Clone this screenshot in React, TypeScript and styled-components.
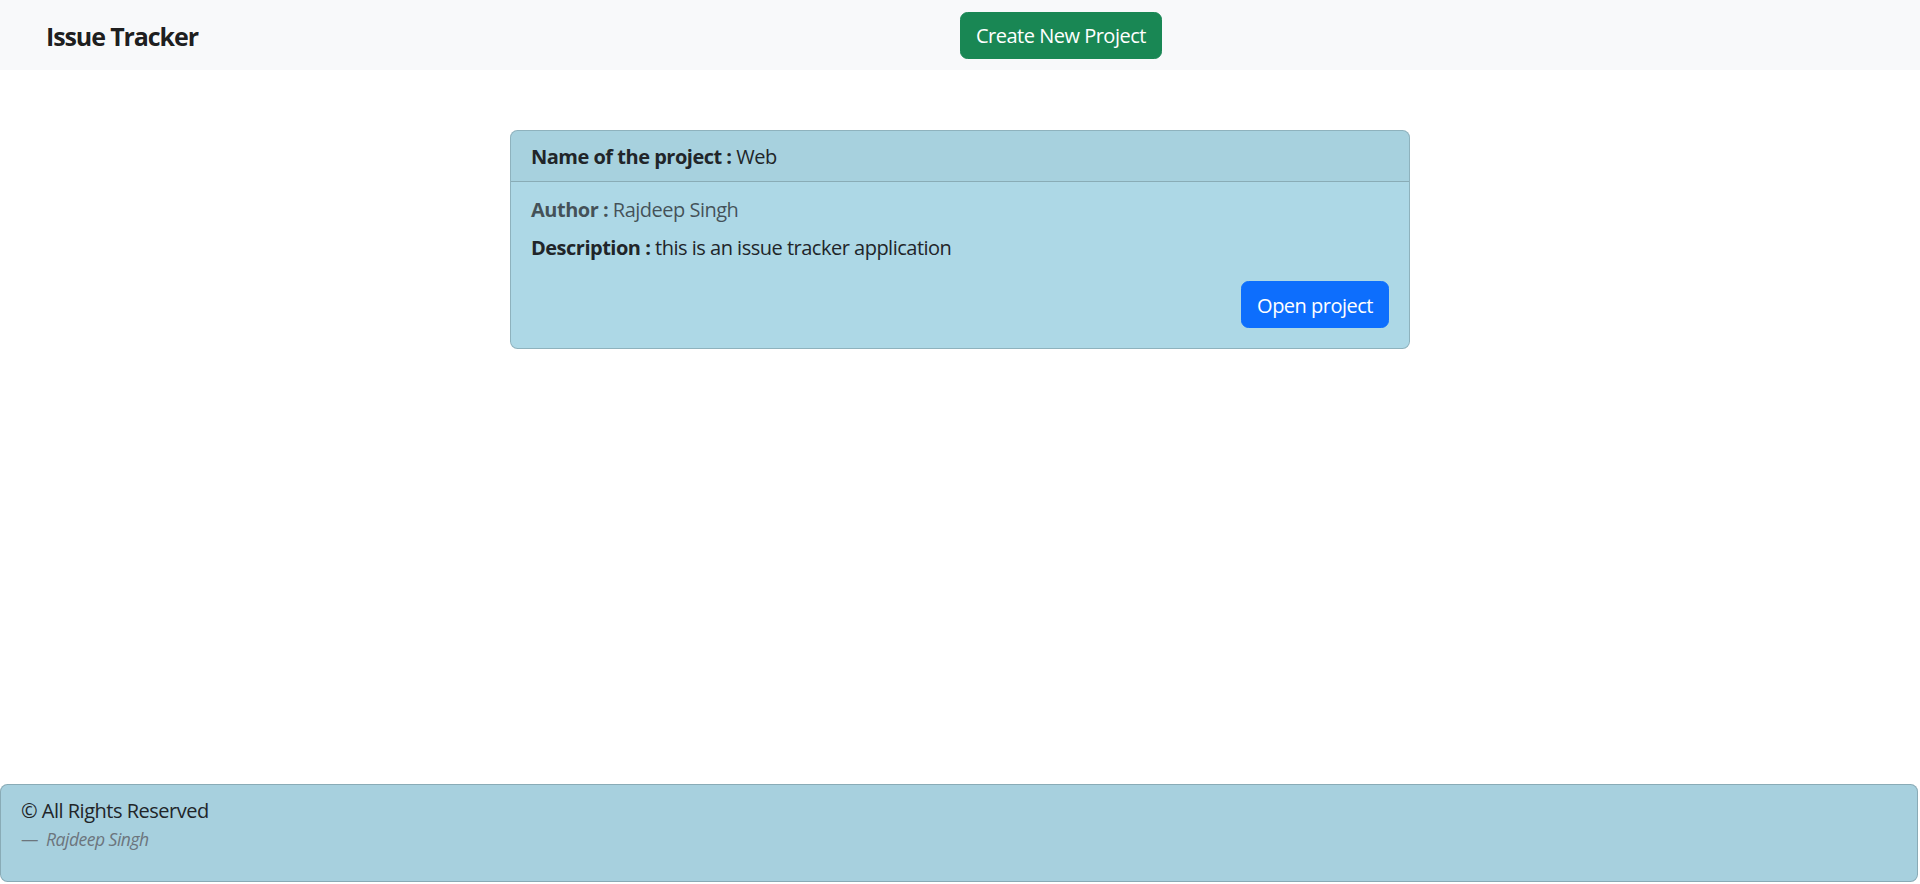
import React from "react";
import styled, { createGlobalStyle } from "styled-components";

const FONT = `"Open Sans", "Noto Sans", "Liberation Sans", sans-serif`;

const GlobalStyle = createGlobalStyle`
  *, *::before, *::after { box-sizing: border-box; }
  html, body { margin: 0; padding: 0; }
  body {
    font-family: ${FONT};
    font-size: 20px;
    line-height: 1.5;
    letter-spacing: -0.5px;
    color: #212529;
    background: #ffffff;
  }
`;

const Page = styled.div`
  min-height: 884px;
  display: flex;
  flex-direction: column;
`;

const Navbar = styled.nav`
  height: 70px;
  background: #f8f9fa;
  display: grid;
  grid-template-columns: 1fr 1fr;
  align-items: center;
`;

const Brand = styled.a`
  justify-self: start;
  margin-left: 46px;
  padding-top: 4px;
  font-size: 25px;
  font-weight: 700;
  letter-spacing: -1.1px;
  color: rgba(0, 0, 0, 0.9);
  text-decoration: none;
  line-height: 1.5;
`;

const NavActions = styled.div`
  display: flex;
  justify-content: flex-start;
`;

const Button = styled.button<{ $variant: "success" | "primary" }>`
  font-family: ${FONT};
  font-size: 20px;
  line-height: 1.5;
  letter-spacing: -0.5px;
  padding: 8.5px 15px 6.5px;
  border-radius: 7.5px;
  border: 1px solid ${(p) => (p.$variant === "success" ? "#198754" : "#0d6efd")};
  background: ${(p) => (p.$variant === "success" ? "#198754" : "#0d6efd")};
  color: #ffffff;
  cursor: pointer;
`;

const Main = styled.main`
  display: flex;
  justify-content: center;
  padding-top: 60px;
`;

const Card = styled.div`
  width: 900px;
  background: #add8e6;
  border: 1px solid rgba(0, 0, 0, 0.175);
  border-radius: 7.5px;
  overflow: hidden;
`;

const CardHeader = styled.div`
  padding: 11px 20px 9px;
  background: rgba(0, 0, 0, 0.03);
  border-bottom: 1px solid rgba(0, 0, 0, 0.175);
`;

const CardBody = styled.div`
  padding: 20px;
  display: flex;
  flex-direction: column;
`;

const Subtitle = styled.h6`
  margin: -4px 0 9px;
  font-size: 20px;
  font-weight: 500;
  line-height: 1.2;
  color: rgba(33, 37, 41, 0.75);
`;

const CardText = styled.p`
  margin: 0 0 18px;
  padding-top: 2px;
`;

const Actions = styled.div`
  display: flex;
  justify-content: flex-end;
`;

const Footer = styled.footer`
  margin: auto 2px 2px 0;
  background: #a7d0de;
  border: 1px solid rgba(0, 0, 0, 0.175);
  border-radius: 7.5px;
  padding: 11px 20px 9px;
`;

const Quote = styled.blockquote`
  margin: 0 0 20px;
`;

const QuoteText = styled.p`
  margin: 0;
`;

const QuoteFooter = styled.div`
  font-size: 17.5px;
  line-height: 1.5;
  color: #6c757d;
  &::before { content: "\\2014\\00A0\\00A0"; }
  cite { font-style: italic; }
`;

export default function App() {
  return (
    <>
      <GlobalStyle />
      <Page>
        <Navbar>
          <Brand href="#">Issue Tracker</Brand>
          <NavActions>
            <Button $variant="success">Create New Project</Button>
          </NavActions>
        </Navbar>
        <Main>
          <Card>
            <CardHeader>
              <b>Name of the project :</b> Web
            </CardHeader>
            <CardBody>
              <Subtitle>
                <b>Author :</b> Rajdeep Singh
              </Subtitle>
              <CardText>
                <b>Description :</b> this is an issue tracker application
              </CardText>
              <Actions>
                <Button $variant="primary">Open project</Button>
              </Actions>
            </CardBody>
          </Card>
        </Main>
        <Footer>
          <Quote>
            <QuoteText>© All Rights Reserved</QuoteText>
            <QuoteFooter>
              <cite>Rajdeep Singh</cite>
            </QuoteFooter>
          </Quote>
        </Footer>
      </Page>
    </>
  );
}
